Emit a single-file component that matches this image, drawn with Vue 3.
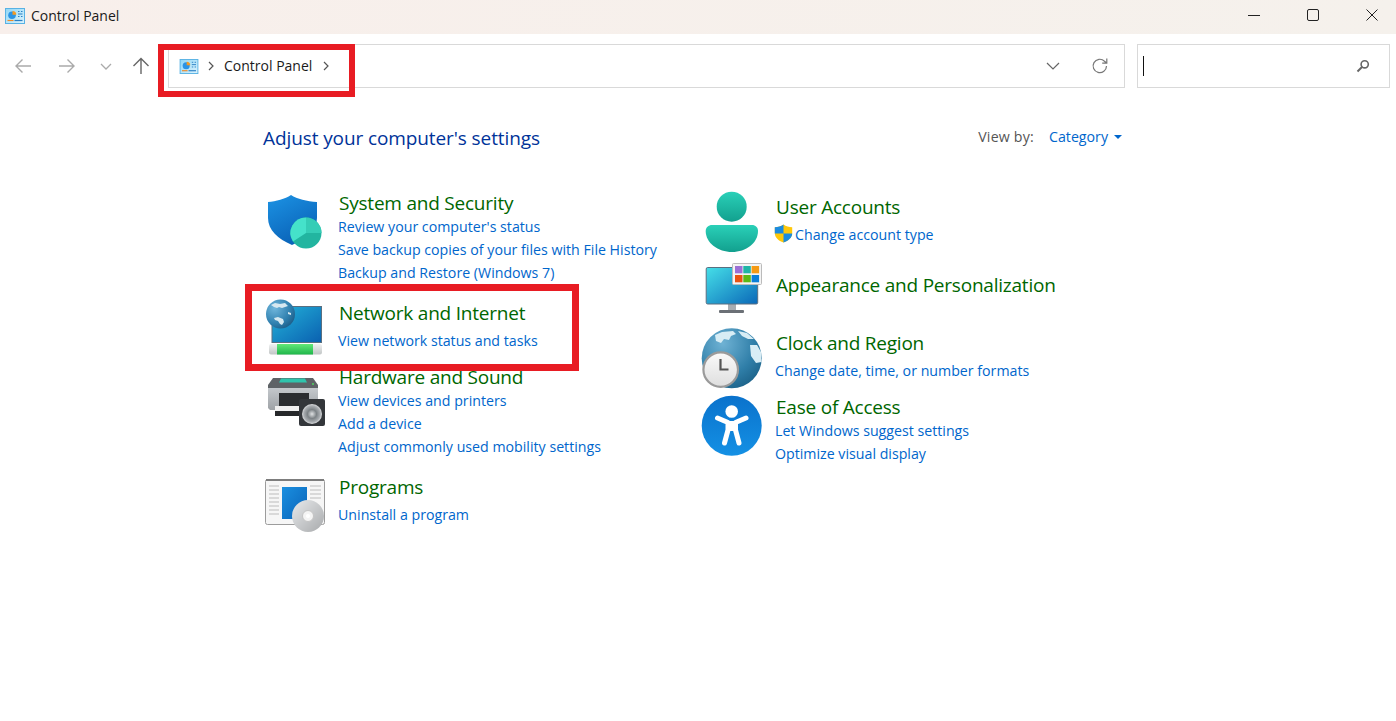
<script setup>
const leftLinks = {
  system: ["Review your computer's status", 'Save backup copies of your files with File History', 'Backup and Restore (Windows 7)'],
  network: ['View network status and tasks'],
  hardware: ['View devices and printers', 'Add a device', 'Adjust commonly used mobility settings'],
  programs: ['Uninstall a program'],
}
const rightLinks = {
  clock: ['Change date, time, or number formats'],
  ease: ['Let Windows suggest settings', 'Optimize visual display'],
}
</script>

<template>
  <div class="window">
    <header class="titlebar">
      <svg class="app-icon" width="20" height="16" viewBox="0 0 20 16">
        <defs>
          <linearGradient id="cpBg" x1="0" y1="0" x2="1" y2="1"><stop offset="0" stop-color="#8fd6f6" /><stop offset="1" stop-color="#dcf3fd" /></linearGradient>
        </defs>
        <rect x="0.500" y="0.500" width="19" height="15" fill="url(#cpBg)" stroke="#58b2e4" />
        <circle cx="7" cy="7.200" r="3.800" fill="#2a94e6" />
        <path d="M7.500 6.700V2.900A3.800 3.800 0 0 1 11.300 6.700z" fill="#f59a23" />
        <path d="M13 3.500h1.500M16 3.500h1.500M13 6h4.500M13 8.500h1.500M16 8.500h1.500" stroke="#2a7fc4" stroke-width="1" />
        <path d="M2.500 12.500h6" stroke="#f08a24" stroke-width="1.200" />
        <path d="M9.500 12.500h8" stroke="#2a7fc4" stroke-width="1.200" />
      </svg>
      <span class="app-title">Control Panel</span>
      <div class="win-controls">
        <svg width="14" height="14" viewBox="0 0 14 14"><path d="M1 7.500h12" stroke="#222" stroke-width="1" /></svg>
        <svg width="14" height="14" viewBox="0 0 14 14"><rect x="1.500" y="1.500" width="11" height="11" rx="1.500" fill="none" stroke="#222" /></svg>
        <svg width="14" height="14" viewBox="0 0 14 14"><path d="M1.500 1.500l11 11M12.500 1.500l-11 11" stroke="#222" /></svg>
      </div>
    </header>

    <div class="toolbar">
      <div class="nav">
        <svg width="20" height="20" viewBox="0 0 20 20"><path d="M18 10H3M9.500 3.500L3 10l6.500 6.500" fill="none" stroke="#aaa" stroke-width="1.400" /></svg>
        <svg width="20" height="20" viewBox="0 0 20 20"><path d="M2 10h15M10.500 3.500L17 10l-6.500 6.500" fill="none" stroke="#aaa" stroke-width="1.400" /></svg>
        <svg width="12" height="20" viewBox="0 0 12 20"><path d="M1 8l5 5 5-5" fill="none" stroke="#aaa" stroke-width="1.300" /></svg>
        <svg width="20" height="20" viewBox="0 0 20 20"><path d="M10 18V2.500M2.500 10l7.500-7.500 7.500 7.500" fill="none" stroke="#666" stroke-width="1.400" /></svg>
      </div>
      <div class="address">
        <svg class="crumb-icon" width="20" height="15" viewBox="0 0 20 16">
          <rect x="0.500" y="0.500" width="19" height="15" fill="url(#cpBg)" stroke="#58b2e4" />
          <circle cx="7" cy="7.200" r="3.800" fill="#2a94e6" />
          <path d="M7.500 6.700V2.900A3.800 3.800 0 0 1 11.300 6.700z" fill="#f59a23" />
          <path d="M13 3.500h1.500M16 3.500h1.500M13 6h4.500M13 8.500h1.500M16 8.500h1.500" stroke="#2a7fc4" stroke-width="1" />
          <path d="M2.500 12.500h6" stroke="#f08a24" stroke-width="1.200" />
          <path d="M9.500 12.500h8" stroke="#2a7fc4" stroke-width="1.200" />
        </svg>
        <svg class="crumb-sep" width="6" height="10" viewBox="0 0 6 10"><path d="M1 1l4 4-4 4" fill="none" stroke="#555" stroke-width="1.200" /></svg>
        <span class="crumb">Control Panel</span>
        <svg class="crumb-sep2" width="6" height="10" viewBox="0 0 6 10"><path d="M1 1l4 4-4 4" fill="none" stroke="#555" stroke-width="1.200" /></svg>
        <svg class="addr-down" width="14" height="8" viewBox="0 0 14 8"><path d="M1 1l6 6 6-6" fill="none" stroke="#666" stroke-width="1.200" /></svg>
        <svg class="addr-refresh" width="18" height="18" viewBox="0 0 18 18"><path d="M15.500 9A6.700 6.700 0 1 1 13.500 4.200L15.500 6M15.800 1.500V6.200H11.200" fill="none" stroke="#777" stroke-width="1.200" /></svg>
      </div>
      <div class="search">
        <span class="caret"></span>
        <svg width="14" height="14" viewBox="0 0 14 14"><circle cx="8.700" cy="5.300" r="3.600" fill="none" stroke="#666" stroke-width="1.600" /><path d="M6 8L1.500 12.500" stroke="#666" stroke-width="2" /></svg>
      </div>
    </div>

    <main class="panel">
      <div class="panel-head">
        <h1>Adjust your computer's settings</h1>
        <div class="view-by">
          <span class="view-label">View by:</span>
          <a class="view-value">Category</a>
          <span class="view-caret"></span>
        </div>
      </div>

      <div class="columns">
        <div class="col col-left">
          <section class="cat cat-system">
            <div class="icon">
              <svg class="ic-system" width="64" height="64" viewBox="0 0 64 64">
                <defs>
                  <linearGradient id="shieldG" x1="0" y1="0" x2="0.500" y2="1"><stop offset="0" stop-color="#1c93e4" /><stop offset="1" stop-color="#0a63b8" /></linearGradient>
                </defs>
                <path d="M28 6C22 10 13 12.500 5 13V29C5 41 15 50 29 56C43 50 54 41 54 29V13C44 12.500 34 10 28 6z" fill="url(#shieldG)" />
                <circle cx="43" cy="44" r="15.500" fill="#22b5a0" />
                <path d="M43 44V28.500A15.500 15.500 0 0 0 30 52.500z" fill="#45e2ca" />
                <path d="M43 44V28.500A15.500 15.500 0 0 1 58.500 44z" fill="#35cdb6" />
              </svg>
            </div>
            <div class="body">
              <h2>System and Security</h2>
              <a v-for="l in leftLinks.system" :key="l">{{ l }}</a>
            </div>
          </section>

          <section class="cat cat-network roomy">
            <div class="icon">
              <svg class="ic-network" width="64" height="64" viewBox="0 0 64 64">
                <defs>
                  <linearGradient id="netScreen" x1="0" y1="0" x2="1" y2="1"><stop offset="0" stop-color="#24b4da" /><stop offset="1" stop-color="#0a60b0" /></linearGradient>
                  <radialGradient id="netGlobe" cx="0.300" cy="0.300" r="0.900"><stop offset="0" stop-color="#6fb6dc" /><stop offset="0.600" stop-color="#2f7fae" /><stop offset="1" stop-color="#174f78" /></radialGradient>
                  <linearGradient id="netBar" x1="0" y1="0" x2="0" y2="1"><stop offset="0" stop-color="#62e878" /><stop offset="1" stop-color="#1fb64a" /></linearGradient>
                  <linearGradient id="netCap" x1="0" y1="0" x2="0" y2="1"><stop offset="0" stop-color="#f0f1f1" /><stop offset="1" stop-color="#c2c6c6" /></linearGradient>
                </defs>
                <rect x="9" y="12.500" width="49.500" height="36" fill="url(#netScreen)" stroke="#5a6f80" />
                <rect x="6" y="50" width="53" height="10.500" rx="2" fill="url(#netCap)" />
                <rect x="14" y="50" width="36" height="10.500" fill="url(#netBar)" />
                <circle cx="17.500" cy="20" r="14.500" fill="url(#netGlobe)" />
                <path d="M8 11l4-2 5 1 5-1 3 3-3 1-3 1-3-1-2 1-3-1zM11 24l4-1 5 2 1 3-2 3-2-1-2-3-3-1zM25 18l3 1 0 2-3-1z" fill="#d6e8f0" />
              </svg>
            </div>
            <div class="body">
              <h2>Network and Internet</h2>
              <a v-for="l in leftLinks.network" :key="l">{{ l }}</a>
            </div>
          </section>

          <section class="cat cat-hardware">
            <div class="icon">
              <svg class="ic-hardware" width="64" height="64" viewBox="0 0 64 64">
                <defs>
                  <linearGradient id="printer" x1="0" y1="0" x2="0" y2="1"><stop offset="0" stop-color="#5e6266" /><stop offset="0.300" stop-color="#5e6266" /><stop offset="0.310" stop-color="#c4c8cc" /><stop offset="1" stop-color="#9ea2a6" /></linearGradient>
                  <radialGradient id="cone" cx="0.500" cy="0.500" r="0.500"><stop offset="0" stop-color="#e0e2e4" /><stop offset="0.450" stop-color="#7c8286" /><stop offset="0.800" stop-color="#a8acb0" /><stop offset="1" stop-color="#dadcde" /></radialGradient>
                </defs>
                <path d="M10 8h40l5 7v23l-2 2H7l-2-2V15z" fill="url(#printer)" />
                <path d="M18 8.500h24l2 4H16z" fill="#2fc4ac" />
                <rect x="16" y="23" width="30" height="13" fill="#2b2d30" />
                <rect x="12" y="36" width="26" height="5" fill="#f0f0f0" />
                <rect x="12" y="41" width="28" height="5" fill="#26282a" />
                <circle cx="50" cy="14" r="1" fill="#4fd65f" />
                <rect x="36" y="29" width="26" height="27" rx="2" fill="#33363a" />
                <circle cx="49" cy="44" r="10" fill="url(#cone)" />
              </svg>
            </div>
            <div class="body">
              <h2>Hardware and Sound</h2>
              <a v-for="l in leftLinks.hardware" :key="l">{{ l }}</a>
            </div>
          </section>

          <section class="cat cat-programs roomy">
            <div class="icon">
              <svg class="ic-programs" width="64" height="64" viewBox="0 0 64 64">
                <defs>
                  <linearGradient id="progBlue" x1="0" y1="0" x2="1" y2="1"><stop offset="0" stop-color="#1a8fe0" /><stop offset="1" stop-color="#0a63b8" /></linearGradient>
                  <linearGradient id="disc" x1="0" y1="0" x2="1" y2="1"><stop offset="0" stop-color="#e8eaec" /><stop offset="1" stop-color="#a8aaac" /></linearGradient>
                </defs>
                <rect x="2.500" y="6.500" width="59" height="45" rx="2" fill="#f6f6f6" stroke="#9c9c9c" />
                <rect x="3" y="6" width="58" height="2" fill="#7d7d7d" />
                <path d="M6 13h10M6 17h10M6 21h10M6 25h10M6 29h10M6 33h10M6 37h10M6 41h10M47 13h11M47 17h11M47 21h11M47 25h11" stroke="#cfcfcf" stroke-width="1.300" />
                <rect x="19" y="14" width="25" height="32" fill="url(#progBlue)" />
                <circle cx="45" cy="43" r="16" fill="url(#disc)" />
                <circle cx="45" cy="43" r="5.500" fill="#f4f4f4" stroke="#c4c4c4" />
                <circle cx="45" cy="43" r="2" fill="#fff" />
              </svg>
            </div>
            <div class="body">
              <h2>Programs</h2>
              <a v-for="l in leftLinks.programs" :key="l">{{ l }}</a>
            </div>
          </section>
        </div>

        <div class="col col-right">
          <section class="cat cat-user roomy">
            <div class="icon">
              <svg class="ic-user" width="64" height="64" viewBox="0 0 64 64">
                <defs>
                  <linearGradient id="userG" x1="0" y1="0" x2="0" y2="1"><stop offset="0" stop-color="#2ad0b8" /><stop offset="1" stop-color="#12a08e" /></linearGradient>
                </defs>
                <circle cx="31.700" cy="16.700" r="15" fill="url(#userG)" />
                <path d="M12 35H52C55.500 35 58 37.500 58 41C58 53 46 62 32 62C18 62 5.700 53 5.700 41C5.700 37.500 8.500 35 12 35z" fill="url(#userG)" />
              </svg>
            </div>
            <div class="body">
              <h2>User Accounts</h2>
              <div class="uac-row">
                <svg width="19" height="19" viewBox="0 0 19 19">
                  <path d="M9.500 0.500C7 2.500 4 3.200 0.800 3.200V9C0.800 13.500 4.500 16.800 9.500 18.500C14.500 16.800 18.200 13.500 18.200 9V3.200C15 3.200 12 2.500 9.500 0.500z" fill="#ffc80a" />
                  <path d="M9.500 0.500C7 2.500 4 3.200 0.800 3.200V9.500H9.500zM9.500 9.500V18.500C14.500 16.800 18.200 13.500 18.200 9.500z" fill="#1b8be0" />
                </svg>
                <a>Change account type</a>
              </div>
            </div>
          </section>

          <section class="cat cat-appearance">
            <div class="icon">
              <svg class="ic-appearance" width="64" height="64" viewBox="0 0 64 64">
                <defs>
                  <linearGradient id="appScreen" x1="0" y1="0" x2="1" y2="1"><stop offset="0" stop-color="#45dfe8" /><stop offset="1" stop-color="#0a68b8" /></linearGradient>
                </defs>
                <rect x="19" y="53" width="25" height="3" rx="1" fill="#6b7076" />
                <rect x="28" y="47" width="8" height="6" fill="#a8adb2" />
                <rect x="6.200" y="10.500" width="51.500" height="36.500" rx="1.500" fill="url(#appScreen)" stroke="#5a6f80" />
                <rect x="32.500" y="6.500" width="29" height="21" rx="1" fill="#f4f4f4" stroke="#bbb" />
                <rect x="35" y="9" width="7.500" height="7.300" fill="#9c6fd6" />
                <rect x="43.300" y="9" width="7.500" height="7.300" fill="#1fb5a6" />
                <rect x="51.600" y="9" width="7.500" height="7.300" fill="#f59a13" />
                <rect x="35" y="18" width="7.500" height="7.300" fill="#ea5312" />
                <rect x="43.300" y="18" width="7.500" height="7.300" fill="#5cb815" />
                <rect x="51.600" y="18" width="7.500" height="7.300" fill="#0a7fd8" />
              </svg>
            </div>
            <div class="body">
              <h2>Appearance and Personalization</h2>
            </div>
          </section>

          <section class="cat cat-clock roomy">
            <div class="icon">
              <svg class="ic-clock" width="64" height="64" viewBox="0 0 64 64">
                <defs>
                  <radialGradient id="clockGlobe" cx="0.350" cy="0.250" r="0.900"><stop offset="0" stop-color="#6fb2d4" /><stop offset="0.600" stop-color="#2f7ea8" /><stop offset="1" stop-color="#175a80" /></radialGradient>
                  <linearGradient id="clockFace" x1="0" y1="0" x2="0" y2="1"><stop offset="0" stop-color="#fafafa" /><stop offset="1" stop-color="#dedede" /></linearGradient>
                </defs>
                <circle cx="31.700" cy="32.300" r="30" fill="url(#clockGlobe)" />
                <path d="M15 9L22 6 33 5 36 8 31 10 29 14 24 13 21 17 16 15zM38 5L47 7 54 13 48 13 42 10zM50 19L57 19 61 26 61.500 36 56 37 51 30z" fill="#d8edf5" />
                <circle cx="20.700" cy="43.600" r="17.300" fill="url(#clockFace)" stroke="#9a9a9a" stroke-width="2.200" />
                <path d="M20.500 33V43.500H28.500" fill="none" stroke="#555" stroke-width="2.200" />
              </svg>
            </div>
            <div class="body">
              <h2>Clock and Region</h2>
              <a v-for="l in rightLinks.clock" :key="l">{{ l }}</a>
            </div>
          </section>

          <section class="cat cat-ease">
            <div class="icon">
              <svg class="ic-ease" width="64" height="64" viewBox="0 0 64 64">
                <defs>
                  <linearGradient id="easeG" x1="0" y1="0" x2="0" y2="1"><stop offset="0" stop-color="#0a72cc" /><stop offset="1" stop-color="#1490e4" /></linearGradient>
                </defs>
                <circle cx="31.700" cy="31.700" r="30" fill="url(#easeG)" />
                <circle cx="31.700" cy="17.500" r="6.300" fill="#fff" />
                <path d="M17.500 24L28 28.500V36L24.500 49M46 24L35.500 28.500V36L39 49" fill="none" stroke="#fff" stroke-width="5" stroke-linecap="round" stroke-linejoin="round" />
                <path d="M28 27H35.500V37H28z" fill="#fff" />
              </svg>
            </div>
            <div class="body">
              <h2>Ease of Access</h2>
              <a v-for="l in rightLinks.ease" :key="l">{{ l }}</a>
            </div>
          </section>
        </div>
      </div>
    </main>

    <div class="mark mark-address"></div>
    <div class="mark mark-network"></div>
  </div>
</template>

<style scoped>
.window {
  position: relative;
  width: 1396px;
  height: 721px;
  overflow: hidden;
  background: #fff;
  font-family: "Open Sans", "Noto Sans", sans-serif;
}

.titlebar {
  display: flex;
  align-items: center;
  height: 34px;
  padding-left: 5px;
  background: linear-gradient(90deg, #f8efeb 0%, #f5f1ec 100%);
}

.app-icon {
  margin-top: -2px;
}

.app-title {
  margin-left: 6px;
  margin-top: -3px;
  font-size: 14px;
  color: #1a1a1a;
}

.win-controls {
  display: flex;
  gap: 45px;
  margin-left: auto;
  margin-right: 17px;
  margin-top: -4px;
}

.toolbar {
  display: flex;
  height: 44px;
  margin-top: 10px;
}

.nav {
  display: flex;
  align-items: center;
  width: 168px;
  padding-left: 13px;
  box-sizing: border-box;
}

.nav svg:nth-child(2) {
  margin-left: 24px;
}

.nav svg:nth-child(3) {
  margin-left: 23px;
}

.nav svg:nth-child(4) {
  margin-left: 19px;
}

.address {
  display: flex;
  align-items: center;
  width: 957px;
  box-sizing: border-box;
  border: 1px solid #d9d9d9;
  padding-left: 10px;
}

.crumb-sep {
  margin-left: 9px;
}

.crumb {
  margin-left: 10px;
  margin-top: -1px;
  font-size: 14px;
  color: #1a1a1a;
}

.crumb-sep2 {
  margin-left: 11px;
}

.addr-down {
  margin-left: auto;
}

.addr-refresh {
  margin-left: 31px;
  margin-right: 15px;
}

.search {
  display: flex;
  align-items: center;
  justify-content: space-between;
  width: 253px;
  margin-left: 12px;
  box-sizing: border-box;
  border: 1px solid #d9d9d9;
  padding: 0 19px 0 5px;
}

.caret {
  width: 1px;
  height: 20px;
  background: #111;
}

.panel {
  width: 859px;
  margin-left: 263px;
}

.panel-head {
  display: flex;
  align-items: flex-start;
  justify-content: space-between;
  margin-top: 36px;
}

h1 {
  margin: 0;
  font-size: 19px;
  font-weight: 400;
  line-height: 28px;
  letter-spacing: -0.1px;
  color: #003399;
}

.view-by {
  display: flex;
  align-items: center;
  font-size: 14.2px;
  line-height: 26px;
}

.view-label {
  letter-spacing: 0.2px;
  color: #555;
}

.view-value {
  margin-left: 15px;
  color: #0066cc;
}

.view-caret {
  width: 0;
  height: 0;
  margin-left: 6px;
  border-left: 4px solid transparent;
  border-right: 4px solid transparent;
  border-top: 4px solid #0066cc;
}

.columns {
  display: flex;
}

.col-left {
  width: 437px;
  padding-top: 38px;
}

.col-right {
  padding-top: 42px;
}

.cat {
  display: flex;
}

.icon {
  flex: none;
  width: 75px;
  height: 0;
}

.icon svg {
  display: block;
}

.body {
  display: flex;
  flex-direction: column;
  align-items: flex-start;
}

h2 {
  margin: 0 0 0 1px;
  font-size: 19px;
  font-weight: 400;
  line-height: 26px;
  letter-spacing: -0.22px;
  white-space: nowrap;
  color: #006600;
}

.body a {
  display: block;
  height: 23px;
  font-size: 14.2px;
  line-height: 21px;
  white-space: nowrap;
  color: #0066cc;
}

.roomy h2 + a,
.uac-row {
  margin-top: 4px;
}

.uac-row {
  display: flex;
  align-items: flex-start;
  margin-left: -1px;
}

.uac-row svg {
  margin-right: 2px;
}

.cat-network { margin-top: 15px; }
.cat-hardware { margin-top: 11px; }
.cat-programs { margin-top: 15px; }
.cat-appearance { margin-top: 25px; }
.cat-clock { margin-top: 32px; }
.cat-ease { margin-top: 11px; }

.ic-system { margin-top: -1px; }
.ic-network { margin-top: -6px; }
.ic-hardware { margin-top: 6px; }
.ic-programs { margin-top: -1px; }
.ic-user { margin-top: -4px; }
.ic-appearance { margin-top: -15px; }
.ic-clock { margin-top: -4px; }
.ic-ease { margin-top: 0; }

.mark {
  position: absolute;
  box-sizing: border-box;
  border: 6px solid #e81c23;
  pointer-events: none;
}

.mark-address {
  left: 158px;
  top: 44px;
  width: 197px;
  height: 53px;
}

.mark-network {
  left: 245px;
  top: 284px;
  width: 334px;
  height: 87px;
  border-width: 7px;
}
</style>
